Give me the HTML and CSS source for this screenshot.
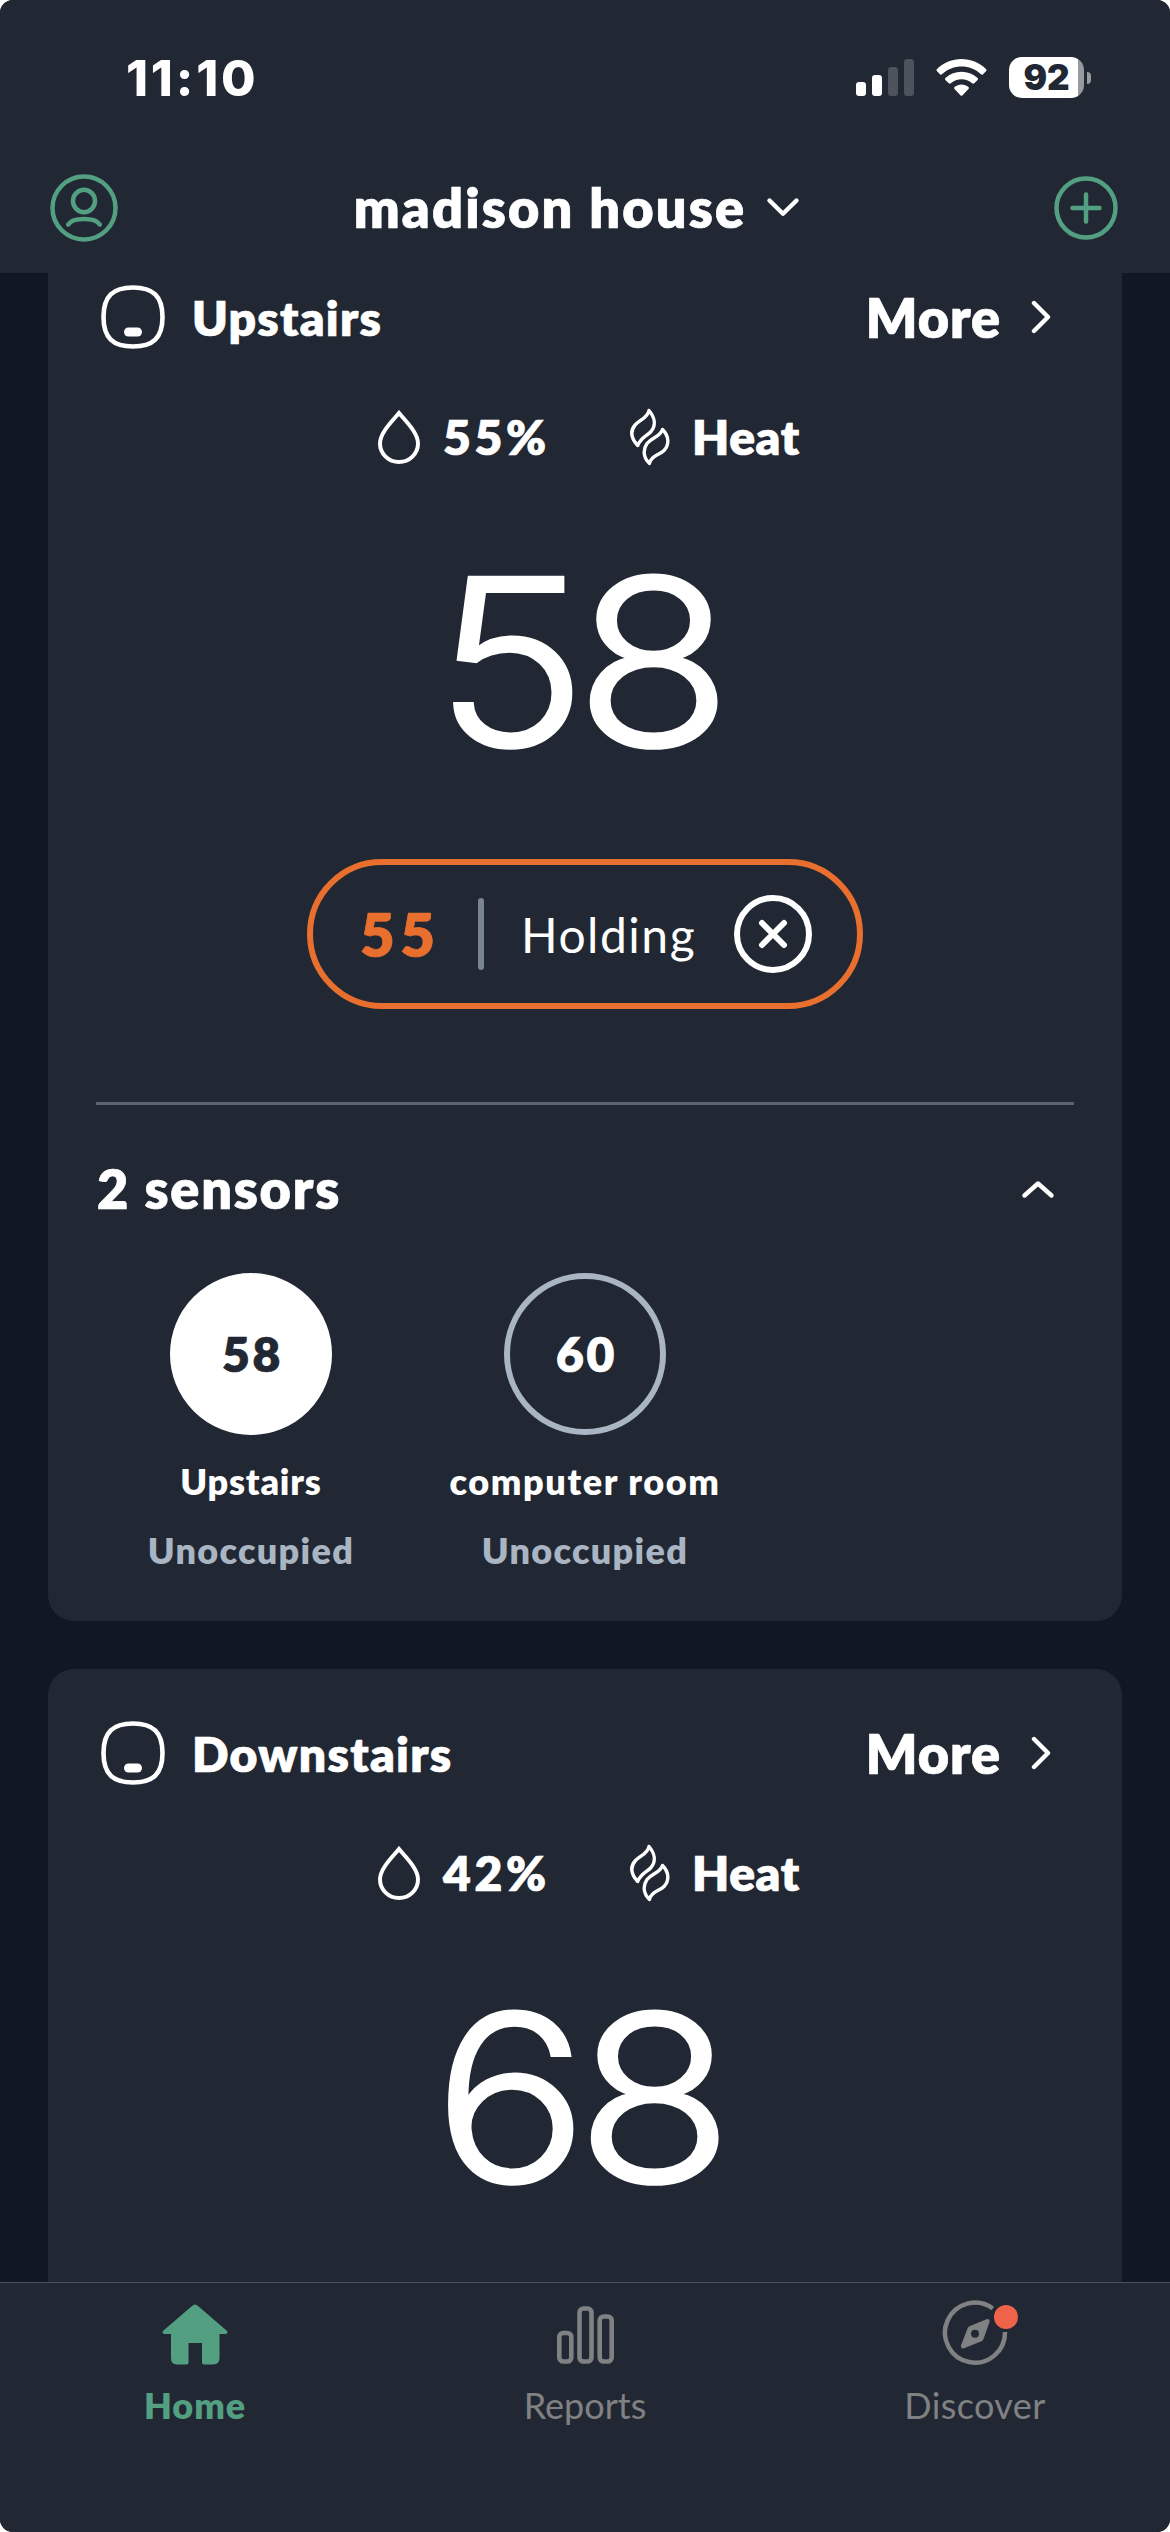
FILE: index.html
```html
<!DOCTYPE html>
<html lang="en">
<head>
<meta charset="utf-8">
<title>madison house</title>
<link rel="stylesheet" href="styles.css">
</head>
<body>
<svg class="sprite" aria-hidden="true">
  <symbol id="thermostat" viewBox="0 0 64 64">
    <path d="M32 2.5C52 2.5 61.5 11 61.5 32S52 61.500 32 61.500 2.500 53 2.500 32 12 2.500 32 2.500Z" fill="none" stroke="currentColor" stroke-width="4.600"/>
    <rect x="23" y="42.500" width="18" height="9" rx="4.500" fill="currentColor"/>
  </symbol>
  <symbol id="drop" viewBox="0 0 42 54">
    <path d="M21 3C14.500 11 2 22.500 2 33.500A19 18.500 0 0 0 40 33.500C40 22.500 27.500 11 21 3Z" fill="none" stroke="currentColor" stroke-width="4"/>
  </symbol>
  <symbol id="heat" viewBox="0 0 40 58">
    <path d="M19 2.500C24.500 9 26.500 17 21 23.500C17 28 11 29.500 7.700 37.500C0 29 .5 22 5.500 16.500C10.500 11.500 18 9.500 19 2.500Z" fill="none" stroke="currentColor" stroke-width="3.400" stroke-linejoin="round"/>
    <path d="M32.500 21.500C38.500 27.500 40 36 34 42.500C29 47.500 21 47.500 19.500 55.500C13.500 50 12.500 42 17 35.500C22 29.500 30.500 28.500 32.500 21.500Z" fill="none" stroke="currentColor" stroke-width="3.400" stroke-linejoin="round"/>
  </symbol>
  <symbol id="chevron" viewBox="0 0 20 34">
    <path d="M3 3L17 17L3 31" fill="none" stroke="currentColor" stroke-width="4.400" stroke-linecap="round" stroke-linejoin="round"/>
  </symbol>
</svg>
<div class="screen">
  <header class="header">
    <div class="status">
      <span class="clock">11:10</span>
      <div class="indicators">
        <svg class="signal" viewBox="0 0 58 38"><g fill="#fff"><rect y="23" width="10" height="14" rx="3"/><rect x="16" y="16" width="10" height="21" rx="3"/></g><g fill="#4d535d"><rect x="32" y="8" width="10" height="29" rx="3"/><rect x="48" width="10" height="37" rx="3"/></g></svg>
        <svg class="wifi" viewBox="0 0 51 38"><path fill="#fff" d="M.8 10.200C14.500-3.400 36.500-3.400 50.200 10.200Q51 11.200 50.200 12L46.800 15.400Q46 16.200 45 15.300C34 5 17 5 6 15.300Q5 16.200 4.200 15.400L.8 12Q0 11.200.8 10.200ZM9.400 19C18.500 10.500 32.500 10.500 41.600 19Q42.500 20 41.600 21L38.200 24.300Q37.200 25.200 36.200 24.300C30 19 21 19 14.800 24.300Q13.800 25.200 12.800 24.300L9.400 21Q8.500 20 9.400 19ZM18.500 28C22.500 24.500 28.500 24.500 32.500 28Q33.400 29 32.500 30L26.600 36.200Q25.500 37.300 24.400 36.200L18.500 30Q17.600 29 18.500 28Z"/></svg>
        <div class="battery"><span class="battery-cell">92</span><span class="battery-tip"></span></div>
      </div>
    </div>
    <div class="titlebar">
      <svg class="profile" viewBox="0 0 68 68"><g fill="none" stroke="currentColor" stroke-width="4.500"><circle cx="34" cy="34" r="31.500"/><ellipse cx="34" cy="27" rx="11" ry="11.200"/><path d="M18.200 50.500C23 43.200 45 43.200 49.800 50.500" stroke-linecap="round"/></g></svg>
      <h1 class="home-name"><span>madison house</span><svg class="chevron-down" viewBox="0 0 32 20"><path d="M2.500 2.500L16 15.800L29.500 2.500" fill="none" stroke="currentColor" stroke-width="4.400" stroke-linecap="round" stroke-linejoin="round"/></svg></h1>
      <svg class="add" viewBox="0 0 64 64"><g fill="none" stroke="currentColor" stroke-width="4.500" stroke-linecap="round"><circle cx="32" cy="32" r="29.500"/><path d="M18.500 32H45.500M32 18.500V45.500"/></g></svg>
    </div>
  </header>

  <main class="content">
    <section class="card">
      <div class="card-head">
        <svg class="thermostat"><use href="#thermostat"/></svg>
        <h2 class="name">Upstairs</h2>
        <span class="more">More</span>
        <svg class="chevron-right"><use href="#chevron"/></svg>
      </div>
      <div class="metrics">
        <div class="metric"><svg class="drop"><use href="#drop"/></svg><span class="humidity">55%</span></div>
        <div class="metric"><svg class="heat"><use href="#heat"/></svg><span class="mode">Heat</span></div>
      </div>
      <div class="temp">58</div>
      <div class="hold">
        <span class="setpoint">55</span>
        <span class="bar"></span>
        <span class="holding">Holding</span>
        <svg class="cancel" viewBox="0 0 78 78"><g fill="none" stroke="#fff"><circle cx="39" cy="39" r="36" stroke-width="6"/><path d="M28 28L50 50M50 28L28 50" stroke-width="6" stroke-linecap="round"/></g></svg>
      </div>
      <hr class="rule">
      <div class="sensors-head">
        <h3 class="sensors-title">2 sensors</h3>
        <svg class="chevron-up" viewBox="0 0 32 20"><path d="M2.500 16.500L16 4.500L29.500 16.500" fill="none" stroke="currentColor" stroke-width="4.400" stroke-linecap="round" stroke-linejoin="round"/></svg>
      </div>
      <div class="sensors">
        <div class="sensor"><span class="dial dial-active">58</span><span class="sensor-name">Upstairs</span><span class="occupancy">Unoccupied</span></div>
        <div class="sensor"><span class="dial">60</span><span class="sensor-name sensor-name-wide">computer room</span><span class="occupancy">Unoccupied</span></div>
      </div>
    </section>

    <section class="card">
      <div class="card-head">
        <svg class="thermostat"><use href="#thermostat"/></svg>
        <h2 class="name">Downstairs</h2>
        <span class="more">More</span>
        <svg class="chevron-right"><use href="#chevron"/></svg>
      </div>
      <div class="metrics">
        <div class="metric"><svg class="drop"><use href="#drop"/></svg><span class="humidity">42%</span></div>
        <div class="metric"><svg class="heat"><use href="#heat"/></svg><span class="mode">Heat</span></div>
      </div>
      <div class="temp">68</div>
    </section>
  </main>

  <nav class="tabs">
    <a class="tab tab-active">
      <svg class="tab-icon" viewBox="0 0 68 68"><path fill="currentColor" d="M31 6Q34 3 37 6L65.500 30.500Q68 33.500 64.500 34H58.500V58Q58.500 64.500 52 64.500H43Q41 64.500 41 62.500V43H27.500V62.500Q27.500 64.500 25.500 64.500H16Q10 64.500 10 58V34H3.500Q0 33.500 2.500 30.500Z"/></svg>
      <span class="tab-label">Home</span>
    </a>
    <a class="tab">
      <svg class="tab-icon" viewBox="0 0 68 68"><g fill="none" stroke="currentColor" stroke-width="4.600"><rect x="8.300" y="33" width="12" height="28.500" rx="4"/><rect x="28.500" y="8.500" width="12" height="53" rx="4"/><rect x="48.700" y="16.500" width="12" height="45" rx="4"/></g></svg>
      <span class="tab-label">Reports</span>
    </a>
    <a class="tab">
      <svg class="tab-icon" viewBox="0 0 68 68"><path d="M64 32A30 30 0 1 1 51.800 8.500" fill="none" stroke="currentColor" stroke-width="4.500"/><path fill="currentColor" fill-rule="evenodd" d="M45.500 19.300Q49 18.300 48.500 22L42.500 39Q42 40.500 40.500 41.200L23 48.300Q19.500 49 20 45.500L26.500 28.500Q27 27 28.500 26.300ZM34 29.800A4 4 0 1 0 34 37.800A4 4 0 1 0 34 29.800Z"/><circle cx="65" cy="17" r="12" fill="#ee634a"/></svg>
      <span class="tab-label tab-label-wide">Discover</span>
    </a>
  </nav>
</div>
</body>
</html>
```
FILE: styles.css
```css
* { box-sizing: border-box; }
body { margin: 0; background: #fff; font-family: Lato, "Open Sans", sans-serif; color: #fff; }
h1, h2, h3 { margin: 0; font-weight: 800; }
svg { display: block; flex: none; overflow: visible; }
.sprite { position: absolute; width: 0; height: 0; }

.screen { display: flex; flex-direction: column; width: 1170px; height: 2532px; overflow: hidden; border-radius: 13px; background: #111724; }

.header { flex: none; height: 273px; background: #222833; }
.status { display: flex; justify-content: space-between; height: 156px; padding: 42px 79px 0 126px; }
.clock { height: 72px; font: 800 50px/72px Inter, sans-serif; letter-spacing: 2.8px; }
.indicators { display: flex; align-items: center; height: 71px; }
.signal { width: 58px; height: 38px; margin-right: 22px; }
.wifi { width: 51px; height: 38px; margin-right: 22px; }
.battery { display: flex; align-items: center; gap: 3px; }
.battery-cell { width: 75px; height: 41px; border-radius: 13px; background: linear-gradient(90deg, #fff 69px, #989a9e 69px); color: #222833; font: 900 35px/41px Inter, sans-serif; text-align: center; }
.battery-tip { width: 4px; height: 12px; border-radius: 0 4px 4px 0; background: #989a9e; }

.titlebar { display: flex; align-items: center; justify-content: space-between; height: 103px; padding: 0 52px 0 50px; }
.profile { width: 68px; height: 68px; color: #529f82; }
.add { width: 64px; height: 64px; color: #529f82; }
.home-name { display: flex; align-items: center; gap: 21px; margin-right: 19px; font-size: 54px; line-height: 64px; letter-spacing: 2.2px; }
.chevron-down { width: 32px; height: 20px; }

.content { flex: 1; min-height: 0; overflow: hidden; padding: 0 48px; }
.card { height: 1388px; padding: 52px 36px 0; border-radius: 26px; background: #222833; }
.card:first-child { margin-top: -40px; }
.card + .card { margin-top: 48px; }
.card-head { display: flex; align-items: center; height: 64px; padding: 0 35px 0 17px; }
.thermostat { width: 64px; height: 64px; margin-right: 27px; }
.name { flex: 1; padding-top: 1px; font-size: 48px; line-height: 58px; letter-spacing: 1.3px; }
.more { margin-right: 30px; padding-top: 2px; font-size: 54px; line-height: 62px; font-weight: 800; letter-spacing: .9px; }
.chevron-right { width: 20px; height: 34px; }

.name, .more, .home-name, .metric, .setpoint, .sensors-title, .dial { -webkit-text-stroke: .7px currentColor; }

.metrics { display: grid; grid-template-columns: 252px 1fr; height: 60px; margin-top: 58px; padding-left: 294px; }
.metric { display: flex; align-items: center; font-size: 48px; font-weight: 800; line-height: 60px; }
.humidity { letter-spacing: 3.7px; }
.mode { letter-spacing: .6px; }
.drop { width: 42px; height: 54px; margin-right: 23px; }
.heat { width: 40px; height: 58px; margin-right: 22px; }

.temp { height: 200px; margin-top: 95px; padding-right: 14px; font: 300 232px/200px Inter, sans-serif; letter-spacing: -11px; text-align: center; transform: scaleX(1.11); -webkit-text-stroke: 3px #fff; }

.hold { display: flex; align-items: center; width: 556px; height: 150px; margin: 97px auto 0; padding-left: 47px; border: 6px solid #e96f2f; border-radius: 75px; }
.setpoint { width: 118px; color: #e96f2f; font-size: 60px; font-weight: 800; letter-spacing: 5.5px; }
.bar { width: 6px; height: 72px; border-radius: 3px; background: #78848e; }
.holding { width: 250px; padding-left: 37px; font-size: 48px; letter-spacing: 1.5px; }
.cancel { width: 78px; height: 78px; }

.rule { height: 3px; margin: 93px 12px 0; border: 0; background: #5a646c; }
.sensors-head { display: flex; align-items: center; justify-content: space-between; height: 60px; margin-top: 54px; padding: 0 32px 0 13px; }
.sensors-title { font-size: 54px; line-height: 60px; letter-spacing: 1.8px; }
.chevron-up { width: 32px; height: 20px; }
.sensors { display: grid; grid-template-columns: repeat(3, 1fr); margin-top: 54px; }
.sensor { display: flex; flex-direction: column; align-items: center; }
.dial { width: 162px; height: 162px; padding-left: 3px; border: 6px solid #aab5c4; border-radius: 50%; font-size: 48px; font-weight: 800; line-height: 150px; letter-spacing: 2.6px; text-align: center; }
.dial-active { border-color: #fff; background: #fff; color: #222833; }
.sensor-name, .occupancy { font-size: 36px; font-weight: 800; line-height: 44px; }
.sensor-name { margin-top: 24px; letter-spacing: .8px; }
.sensor-name-wide { letter-spacing: 1.6px; }
.occupancy { margin-top: 25px; color: #aab5c4; letter-spacing: 1.3px; }

.tabs { flex: none; display: grid; grid-template-columns: repeat(3, 1fr); height: 250px; border-top: 1px solid #4b545e; background: #222833; }
.tab { display: flex; flex-direction: column; align-items: center; padding-top: 17px; color: #808182; }
.tab-active { color: #529f82; }
.tab-icon { width: 68px; height: 68px; }
.tab-label { margin-top: 15px; font-size: 36px; line-height: 44px; }
.tab-label-wide { letter-spacing: .4px; }
.tab-active .tab-label { font-weight: 800; letter-spacing: .9px; }
```
